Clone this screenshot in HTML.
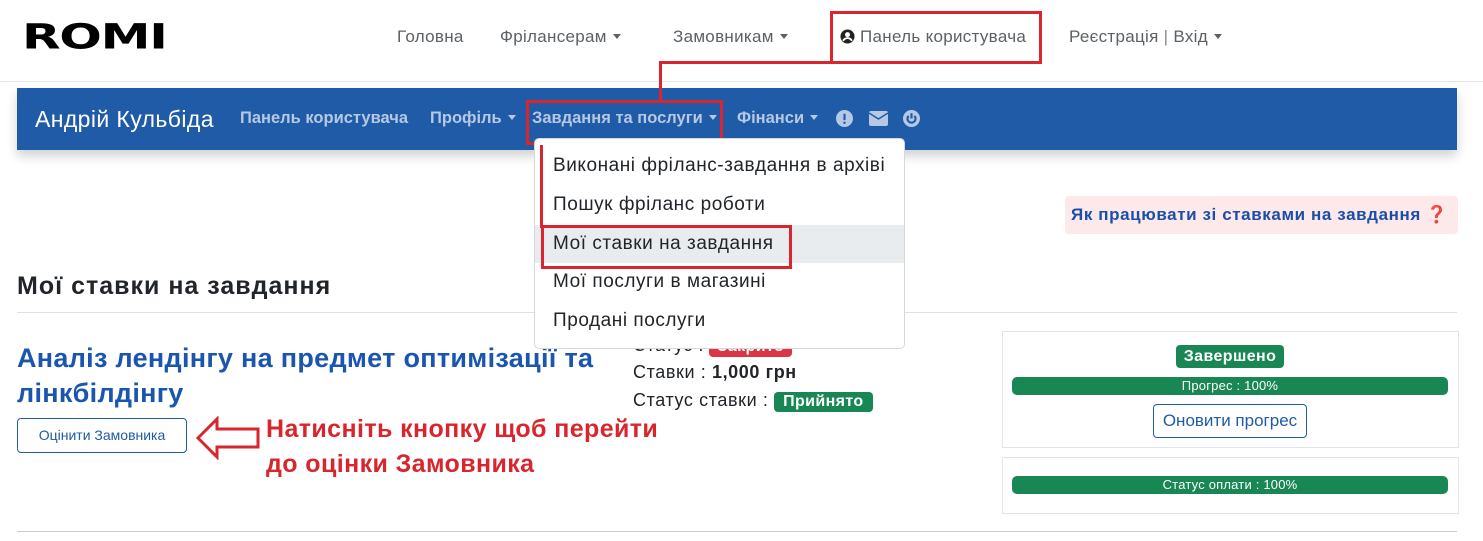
<!DOCTYPE html>
<html><head><meta charset="utf-8">
<style>
*{margin:0;padding:0;box-sizing:border-box}
body{width:1483px;height:541px;overflow:hidden;background:#fff;font-family:"Liberation Sans","DejaVu Sans",sans-serif;color:#212529;position:relative}
.a{position:absolute;white-space:nowrap}
.nav{font-size:17px;color:#5c6166;top:27px;letter-spacing:0.3px}
.car{display:inline-block;width:0;height:0;border-left:4px solid transparent;border-right:4px solid transparent;border-top:5px solid currentColor;vertical-align:3px;margin-left:6px}
.bn{font-size:16.5px;color:#b6c8e4;top:109px;font-weight:bold}
.dd{font-size:19px;color:#212529;left:553px;letter-spacing:0.55px}
.red{border:3px solid #d9262e}
.badge{color:#fff;font-weight:bold;border-radius:4px;font-size:16px;text-align:center;letter-spacing:0.4px}
.prog{background:#198754;border-radius:5px;color:#fff;font-size:13px;text-align:center;line-height:18px;letter-spacing:0.2px}
</style></head><body>
<div class="a" style="left:22px;top:18px;font-family:'DejaVu Sans',sans-serif;font-weight:900;font-size:38px;letter-spacing:-1px;color:#000;transform:scaleX(1.32) scaleY(0.92);transform-origin:left top;line-height:40px">ROMI</div>
<div class="a nav" style="left:397px">Головна</div>
<div class="a nav" style="left:500px">Фрілансерам<span class="car"></span></div>
<div class="a nav" style="left:673px">Замовникам<span class="car"></span></div>
<div class="a nav" style="left:840px"><svg width="15" height="15" viewBox="0 0 16 16" style="vertical-align:-2px"><circle cx="8" cy="8" r="7.5" fill="#222"/><circle cx="8" cy="6" r="2.7" fill="#fff"/><path d="M3.3 12.6c1-2 2.7-3 4.7-3s3.7 1 4.7 3" stroke="#fff" stroke-width="2" fill="none"/></svg> Панель користувача</div>
<div class="a nav" style="left:1069px">Реєстрація <span style="color:#888">|</span> Вхід<span class="car"></span></div>
<div class="a" style="left:0;top:81px;width:1483px;height:1px;background:#e3e5e8"></div>

<div class="a" style="left:17px;top:88px;width:1440px;height:62px;background:#1f5ba6;box-shadow:0 6px 10px rgba(0,0,0,.18)"></div>
<div class="a" style="left:35px;top:106px;font-size:23px;color:#fff;letter-spacing:0.4px">Андрій Кульбіда</div>
<div class="a bn" style="left:240px">Панель користувача</div>
<div class="a bn" style="left:430px">Профіль<span class="car"></span></div>
<div class="a bn" style="left:532px">Завдання та послуги<span class="car"></span></div>
<div class="a bn" style="left:737px">Фінанси<span class="car"></span></div>
<svg class="a" style="left:836px;top:110px" width="17" height="17" viewBox="0 0 16 16"><circle cx="8" cy="8" r="8" fill="#b6c8e4"/><rect x="7" y="3.5" width="2" height="6" fill="#1f5ba6"/><rect x="7" y="11" width="2" height="2" fill="#1f5ba6"/></svg>
<svg class="a" style="left:869px;top:111px" width="19" height="15" viewBox="0 0 19 15"><rect width="19" height="15" rx="2" fill="#b6c8e4"/><path d="M0 2l9.5 6L19 2" stroke="#1f5ba6" stroke-width="1.5" fill="none"/></svg>
<svg class="a" style="left:903px;top:110px" width="17" height="17" viewBox="0 0 16 16"><circle cx="8" cy="8" r="8" fill="#b6c8e4"/><path d="M5.3 5.5a3.8 3.8 0 1 0 5.4 0" stroke="#1f5ba6" stroke-width="2" fill="none"/><rect x="7" y="3" width="2" height="5" fill="#1f5ba6"/></svg>

<div class="a red" style="left:830px;top:11px;width:212px;height:53px"></div>
<div class="a" style="left:659px;top:61px;width:173px;height:3px;background:#d9262e"></div>
<div class="a" style="left:659px;top:61px;width:3px;height:40px;background:#d9262e"></div>
<div class="a red" style="left:526px;top:100px;width:197px;height:45px"></div>

<div class="a" style="left:1065px;top:196px;width:393px;height:38px;background:#fde8ea;border-radius:4px"></div>
<div class="a" style="left:1071px;top:205px;font-size:17px;font-weight:bold;color:#1a4fa8;letter-spacing:0.6px">Як працювати зі ставками на завдання <span style="color:#d9262e">❓</span></div>

<div class="a" style="left:17px;top:272px;font-size:25px;font-weight:bold;color:#212529;letter-spacing:1px">Мої ставки на завдання</div>
<div class="a" style="left:17px;top:312px;width:1440px;height:1px;background:#dee2e6"></div>

<div class="a" style="left:17px;top:341px;font-size:27px;font-weight:bold;color:#1a56b0;line-height:35px;letter-spacing:0.3px">Аналіз лендінгу на предмет оптимізації та<br>лінкбілдінгу</div>
<div class="a" style="left:17px;top:418px;width:170px;height:35px;border:1px solid #1f5ba6;border-radius:4px;color:#1f5ba6;font-size:14px;text-align:center;line-height:33px">Оцінити Замовника</div>
<svg class="a" style="left:195px;top:416px" width="66" height="44" viewBox="0 0 66 44"><path d="M3 22L22 3V13H63V31H22V41Z" fill="none" stroke="#d9262e" stroke-width="3" stroke-linejoin="miter"/></svg>
<div class="a" style="left:266px;top:412px;font-size:25px;font-weight:bold;color:#d9262e;line-height:35px;letter-spacing:0.4px">Натисніть кнопку щоб перейти<br>до оцінки Замовника</div>

<div class="a" style="left:633px;top:335px;font-size:18px;letter-spacing:0.5px">Статус : <span class="badge" style="background:#dc3545;padding:1px 8px;display:inline-block">Закрито</span></div>
<div class="a" style="left:633px;top:362px;font-size:18px;letter-spacing:0.6px">Ставки : <b>1,000 грн</b></div>
<div class="a" style="left:633px;top:390px;font-size:18px;letter-spacing:0.6px">Статус ставки : <span class="badge" style="background:#198754;padding:1px 9px;display:inline-block">Прийнято</span></div>

<div class="a" style="left:1002px;top:331px;width:457px;height:117px;border:1px solid #e2e4e7"></div>
<div class="a badge" style="left:1176px;top:345px;width:108px;height:23px;line-height:23px;background:#198754">Завершено</div>
<div class="a prog" style="left:1012px;top:377px;width:436px;height:18px">Прогрес : 100%</div>
<div class="a" style="left:1153px;top:404px;width:154px;height:34px;border:1px solid #1f5ba6;border-radius:4px;color:#1f5ba6;font-size:17px;text-align:center;line-height:32px">Оновити прогрес</div>
<div class="a" style="left:1002px;top:457px;width:457px;height:57px;border:1px solid #e2e4e7"></div>
<div class="a prog" style="left:1012px;top:476px;width:436px;height:18px">Статус оплати : 100%</div>

<div class="a" style="left:17px;top:531px;width:1440px;height:1px;background:#c8ccd0"></div>

<div class="a" style="left:534px;top:138px;width:371px;height:211px;background:#fff;border:1px solid #d5d8dc;border-radius:5px;z-index:5">
<div style="position:absolute;left:0;top:86px;width:369px;height:38px;background:#e9ecef"></div>
<div class="a dd" style="left:18px;top:16px">Виконані фріланс-завдання в архіві</div>
<div class="a dd" style="left:18px;top:55px">Пошук фріланс роботи</div>
<div class="a dd" style="left:18px;top:94px">Мої ставки на завдання</div>
<div class="a dd" style="left:18px;top:132px">Мої послуги в магазині</div>
<div class="a dd" style="left:18px;top:171px">Продані послуги</div>
</div>
<div class="a" style="left:540px;top:145px;width:3px;height:83px;background:#d9262e;z-index:6"></div>
<div class="a red" style="left:541px;top:225px;width:251px;height:44px;z-index:6"></div>
</body></html>
